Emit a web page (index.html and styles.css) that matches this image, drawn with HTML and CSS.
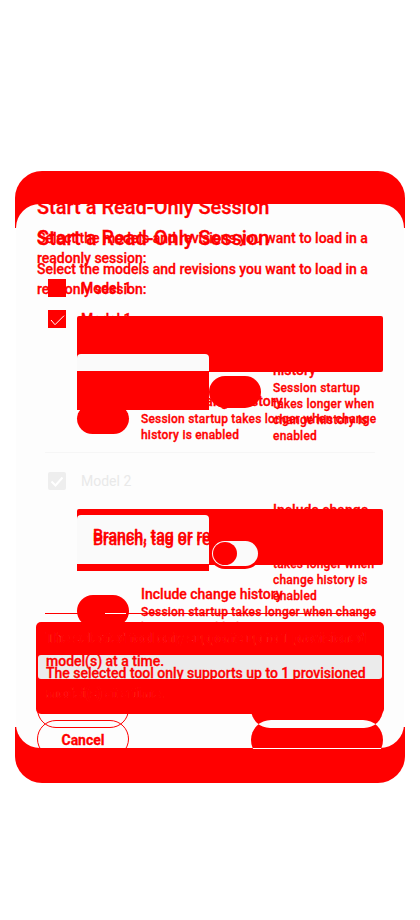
FILE: index.html
```html
<!DOCTYPE html>
<html lang="en">
<head>
    <meta charset="UTF-8">
    <title>Start a Read-Only Session</title>
    <link rel="stylesheet" href="styles.css">
</head>
<body>
<div class="stage">
    <!-- dialog frame -->
    <div class="shell">
        <div class="band-top"></div>
        <div class="card"></div>
        <div class="band-bottom"></div>
    </div>

    <!-- filled controls -->
    <div class="controls">
        <div class="block"></div>
        <div class="field-row">
            <div class="field"><div class="field-top"></div></div>
            <div class="pill"></div>
        </div>
        <div class="pill pill-rim"></div>

        <div class="rule-faint"></div>
        <div class="model model-off">
            <span class="check check-off">
                <svg width="18" height="18" viewBox="0 0 18 18"><path d="M3.5 9.5L7.5 13.5L14.5 5.5" fill="none" stroke="#fff" stroke-width="2"/></svg>
            </span>
            <span>Model 2</span>
        </div>

        <div class="block block-second"></div>
        <div class="field-row field-row-second">
            <div class="field">
                <div class="field-body">
                    <div class="hint">Branch, tag or revision</div>
                    <div class="hint">Branch, tag or revision</div>
                </div>
            </div>
            <div class="pill pill-open"><div class="track"><div class="thumb"></div></div></div>
        </div>
        <div class="pill pill-last"></div>
        <div class="rule"><span class="rule-gap"></span></div>

        <div class="alert">
            <div class="alert-ghost">The selected tool only supports up to 1 provisioned</div>
            <div class="alert-band">
                <div>model(s) at a time.</div>
                <div>The selected tool only supports up to 1 provisioned</div>
            </div>
            <div class="alert-ghost alert-ghost-end">model(s) at a time.</div>
        </div>

        <div class="actions">
            <div class="btn-ghost"></div>
            <div class="btn-fill"></div>
        </div>
        <div class="actions actions-second">
            <div class="btn-ghost">Cancel</div>
            <div class="btn-fill btn-fill-second">
                <div class="lens"></div>
                <div class="btn-line"></div>
            </div>
        </div>
    </div>

    <!-- first copy of the text -->
    <div class="copy copy-first">
        <h2>Start a Read-Only Session</h2>
        <p class="lead">Select the models and revisions you want to load in a readonly session:</p>
        <div class="model">
            <span class="check"></span>
            <span>Model 1</span>
        </div>
        <div class="note note-narrow">
            <h4>Include change history</h4>
            <p>Session startup takes longer when change history is enabled</p>
        </div>
        <div class="note note-narrow note-gap">
            <h4>Include change history</h4>
            <p>Session startup takes longer when change history is enabled</p>
        </div>
    </div>

    <!-- second copy of the text -->
    <div class="copy copy-second">
        <h2>Start a Read-Only Session</h2>
        <p class="lead">Select the models and revisions you want to load in a readonly session:</p>
        <div class="model">
            <span class="check">
                <svg width="18" height="18" viewBox="0 0 18 18"><path d="M3 10L7 14.7L16 5.7" fill="none" stroke="#fff" stroke-width="1"/></svg>
            </span>
            <span>Model 1</span>
        </div>
        <div class="note note-wide">
            <h4>Include change history</h4>
            <p>Session startup takes longer when change history is enabled</p>
        </div>
        <div class="note note-wide note-gap-wide">
            <h4>Include change history</h4>
            <p>Session startup takes longer when change history is enabled</p>
        </div>
    </div>
</div>
</body>
</html>
```

FILE: styles.css
```css
* {
    box-sizing: border-box;
}
body {
    margin: 0;
    background: #fff;
    color: #f00;
    font-family: Roboto, sans-serif;
}
h2, h4, p {
    margin: 0;
}
.stage {
    display: grid;
    width: 420px;
    height: 920px;
    overflow: hidden;
}
.stage > div {
    grid-area: 1 / 1;
    min-width: 0;
}

/* frame */
.shell {
    display: flex;
    flex-direction: column;
    padding: 171px 15px 0;
}
.band-top {
    height: 57px;
    background: #f00;
    border-radius: 27px 27px 0 0;
}
.card {
    height: 544px;
    margin: -24px 1px 0;
    background: #fdfdfd;
    border-radius: 24px;
    z-index: 1;
}
.band-bottom {
    height: 56px;
    margin-top: -21px;
    background: #f00;
    border-radius: 0 0 27px 27px;
}

/* controls */
.controls {
    padding-top: 316px;
    z-index: 2;
}
.block {
    width: 306px;
    height: 56px;
    margin-left: 77px;
    background: #f00;
    border-radius: 2px;
}
.block-second {
    margin-top: 19px;
}
.field-row {
    display: flex;
    height: 56px;
    margin: -18px 0 0 77px;
}
.field-row-second {
    margin-top: -50px;
}
.field {
    width: 132px;
    height: 56px;
    background: #f00;
}
.field-top {
    height: 17px;
    background: #fafafa;
    border-radius: 4px 4px 0 0;
}
.field-body {
    height: 49px;
    padding: 19px 0 0 16px;
    background: #fafafa;
    border-radius: 4px 4px 0 0;
    white-space: nowrap;
}
.hint {
    height: 4px;
    font-size: 16px;
    font-weight: 500;
    line-height: 4px;
    -webkit-text-stroke: 0.3px #f00;
}
.pill {
    width: 52px;
    height: 32px;
    margin-top: 22px;
    background: #f00;
    border-radius: 16px;
}
.pill-rim {
    height: 31px;
    margin: -7px 0 0 77px;
    border-top: 1.5px solid #fdfdfd;
}
.pill-open {
    padding: 4px 3px 3px;
}
.track {
    height: 25px;
    padding: 1px;
    background: #fafafa;
    border-radius: 13px;
}
.thumb {
    width: 24px;
    height: 23px;
    background: #f00;
    border-radius: 50%;
}
.pill-last {
    margin: 24px 0 0 77px;
}
.rule-faint {
    width: 330px;
    height: 1px;
    margin: 18px 0 0 45px;
    background: #f6f6f6;
}
.rule {
    display: flex;
    width: 330px;
    height: 1px;
    margin: -14px 0 0 45px;
    background: #f00;
}
.rule-gap {
    width: 21px;
    margin-left: 60px;
    background: #fff;
}
.model {
    display: flex;
    align-items: center;
    height: 18px;
    gap: 15px;
    margin-left: 11px;
    font-size: 14px;
    font-weight: 500;
}
.model-off {
    margin: 19px 0 0 48px;
    color: #e9e9e9;
    font-weight: 400;
}
.check {
    width: 18px;
    height: 18px;
    background: #f00;
}
.check svg {
    display: block;
}
.check-off {
    background: #eee;
    border-radius: 2px;
}

/* alert */
.alert {
    width: 348px;
    height: 92px;
    margin: 8px 0 0 36px;
    padding-top: 6px;
    background: #f00;
    border-radius: 5px;
    font-size: 14px;
    font-weight: 500;
}
.alert-ghost {
    height: 20px;
    padding-left: 10px;
    color: #fff;
    line-height: 20px;
    -webkit-text-stroke: 1.5px #f00;
}
.alert-ghost-end {
    margin-top: 4px;
}
.alert-band {
    height: 24px;
    margin: 7px 2px 0;
    padding-left: 8px;
    background: #ebebeb;
    border-radius: 3px;
    line-height: 12px;
    -webkit-text-stroke: 0.3px #f00;
}

/* buttons */
.actions {
    display: flex;
    justify-content: space-between;
    width: 346px;
    height: 38px;
    margin: -24px 0 0 37px;
}
.actions-second {
    height: 40px;
    margin-top: -8px;
}
.btn-ghost {
    width: 92px;
    height: 38px;
    border: 1.5px solid #f00;
    border-radius: 19px;
    font-size: 14px;
    font-weight: 700;
    line-height: 38px;
    text-align: center;
    -webkit-text-stroke: 0.3px #f00;
}
.btn-fill {
    width: 132px;
    height: 38px;
    background: #f00;
    border-radius: 19px;
}
.btn-fill-second {
    height: 40px;
    border-radius: 20px;
    overflow: hidden;
}
.lens {
    height: 38px;
    margin-top: -30px;
    background: #fdfdfd;
    border-radius: 19px;
}
.btn-line {
    height: 1px;
    margin-top: 20px;
    background: #fff;
}

/* text */
.copy {
    padding-left: 37px;
    z-index: 3;
    -webkit-text-stroke: 0.3px #f00;
}
.copy-first {
    padding-top: 191px;
}
.copy-second {
    padding-top: 222px;
}
.copy h2 {
    font-size: 20px;
    font-weight: 500;
    line-height: 32px;
}
.lead {
    width: 340px;
    margin: 5px 0 11px;
    font-size: 14px;
    font-weight: 500;
    line-height: 20px;
}
.note h4 {
    font-size: 14px;
    font-weight: 500;
    line-height: 20px;
}
.note p {
    font-size: 12px;
    font-weight: 500;
    letter-spacing: 0.2px;
    line-height: 16px;
}
.note-narrow {
    width: 105px;
    margin: 43px 0 0 236px;
}
.note-gap {
    margin-top: 56px;
}
.note-wide {
    width: 240px;
    margin: 63px 0 0 104px;
}
.note-gap-wide {
    margin-top: 141px;
}
```
